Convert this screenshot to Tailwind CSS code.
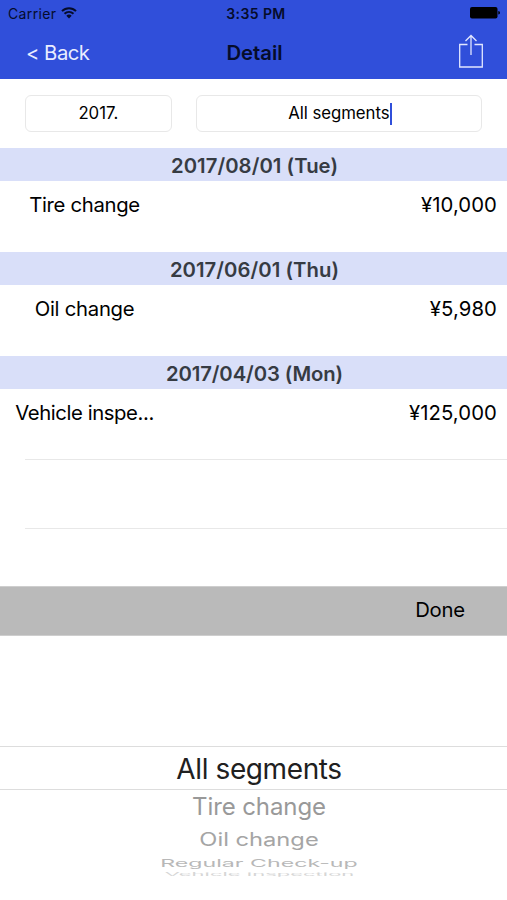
<!DOCTYPE html>
<html lang="en">
<head>
<meta charset="utf-8">
<title>Detail</title>
<script src="https://cdn.jsdelivr.net/npm/@tailwindcss/browser@4"></script>
</head>
<body class="w-[507px] h-[900px] overflow-hidden bg-white text-black font-['Inter',sans-serif] text-[20.3px] whitespace-nowrap flex flex-col">
<header class="h-[79px] shrink-0 bg-[#304fda] text-[#050c2b]">
  <div class="h-[28px] grid grid-cols-3 items-center px-2 pb-[2px] text-[14px]">
    <div class="flex items-center gap-[5px] tracking-[.35px]"><span>Carrier</span>
      <svg class="w-4 h-3" viewBox="0 0 16 12" fill="none" stroke="currentColor" stroke-width="2"><path d="M1 4.1C5 .2 11 .2 15 4.1M3.5 6.8C6.1 4.3 9.9 4.3 12.5 6.8"/><path d="M5.3 8.7Q8 6.5 10.7 8.7L8 11.5Z" fill="currentColor" stroke="none"/></svg>
    </div>
    <div class="text-center font-semibold pl-[5px] tracking-[.4px]">3:35 PM</div>
    <div class="flex justify-end mr-[-1px]"><svg class="w-[30px] h-3" viewBox="0 0 30 12" fill="black"><rect width="27.5" height="11.5" rx="2"/><path d="M28.3 4Q30 4 30 5.8Q30 7.6 28.3 7.6Z"/></svg></div>
  </div>
  <div class="h-[50px] grid grid-cols-3 items-center pl-[26px] pr-[24px]">
    <div class="text-[#e9edff] tracking-[-.5px]">&lt; Back</div>
    <h1 class="text-center font-semibold">Detail</h1>
    <svg class="w-[24px] h-[34px] justify-self-end -mt-[5px]" viewBox="0 0 24 34" fill="none" stroke="#e2e7ff" stroke-width="1.3"><path d="M8.5 10.5H.7V33H23.3V10.5H15.5M12 21V1.5M6.5 7L12 1.5L17.5 7"/></svg>
  </div>
</header>
<div class="h-[69px] shrink-0 flex gap-6 px-[25px] pt-4 text-[16.8px]">
  <div class="w-[147px] h-[37px] rounded-md border border-[#e8e8e8] flex items-center justify-center">2017.</div>
  <div class="w-[287px] h-[37px] rounded-md border border-[#e8e8e8] flex items-center justify-center pl-[2px]"><span class="tracking-[-.05px]">All segments</span><span class="w-[2px] h-[22px] bg-[#304fda]"></span></div>
</div>
<main class="h-[438px] shrink-0">
  <section class="h-[104px]">
    <h2 class="h-[33px] bg-[#d9dff9] flex items-center justify-center pt-[3px] pl-[2px] font-semibold text-[#363b43] tracking-[.05px]">2017/08/01 (Tue)</h2>
    <div class="flex justify-between pt-[9px] pr-[10px]"><span class="w-[169px] text-center tracking-[-.3px]">Tire change</span><span class="tracking-[.1px]">¥10,000</span></div>
  </section>
  <section class="h-[104px]">
    <h2 class="h-[33px] bg-[#d9dff9] flex items-center justify-center pt-[3px] pl-[2px] font-semibold text-[#363b43] tracking-[.05px]">2017/06/01 (Thu)</h2>
    <div class="flex justify-between pt-[9px] pr-[10px]"><span class="w-[169px] text-center tracking-[-.25px]">Oil change</span><span class="tracking-[.1px]">¥5,980</span></div>
  </section>
  <section class="h-[104px]">
    <h2 class="h-[33px] bg-[#d9dff9] flex items-center justify-center pt-[3px] pl-[2px] font-semibold text-[#363b43] tracking-[-.1px]">2017/04/03 (Mon)</h2>
    <div class="flex justify-between pt-[9px] pr-[10px]"><span class="w-[169px] text-center tracking-[-.4px]">Vehicle inspe...</span><span class="tracking-[.1px]">¥125,000</span></div>
  </section>
  <div class="ml-[25px] -mt-px h-[70px] border-y border-[#e8e8e8]"></div>
</main>
<div class="h-[50px] shrink-0 bg-[#bababa] border-y border-[#cecece] flex items-center justify-end pr-[42px] pb-[2px] tracking-[-.2px]">Done</div>
<div class="h-[264px] shrink-0 pt-[110px] flex flex-col items-center">
  <div class="w-full h-[44px] border-y-[1.5px] border-[#dddddd] flex items-center justify-center pl-[11px] pt-[2px] text-[28px] tracking-[-.4px] text-[#202020]">All segments</div>
  <div class="h-[34px] flex items-center pl-[11px] text-[#999999]"><span class="text-[24px] tracking-[-.1px]">Tire change</span></div>
  <div class="h-[31px] flex items-center pl-[11px] text-[#a5a5a5]"><span class="text-[23.7px] scale-y-[.76]">Oil change</span></div>
  <div class="h-[16px] flex items-center pl-[11px] text-[#b8b8b8]"><span class="text-[23.2px] scale-y-[.46]">Regular Check-up</span></div>
  <div class="h-[6px] pt-[1px] pl-3 text-[#d6d6d6]"><span class="block text-[22px] leading-[22px] origin-top scale-y-[.2]">Vehicle inspection</span></div>
</div>
</body>
</html>
